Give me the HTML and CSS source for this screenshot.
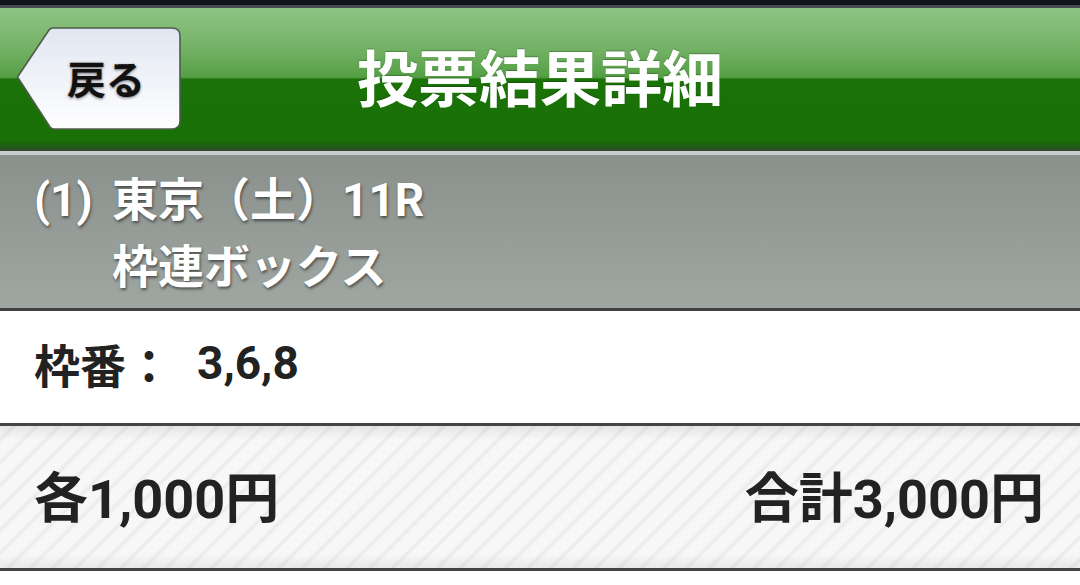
FILE: index.html
```html
<!DOCTYPE html>
<html lang="ja">
<head>
<meta charset="utf-8">
<title>投票結果詳細</title>
<link rel="stylesheet" href="styles.css">
</head>
<body>
<div class="topbar"></div>
<header class="header">
  <a class="back">
    <svg class="back-shape" width="166" height="104" viewBox="0 0 166 104">
      <defs>
        <linearGradient id="bg" x1="0" y1="0" x2="0" y2="1">
          <stop offset="0" stop-color="#e0e6f1"/>
          <stop offset="1" stop-color="#ffffff"/>
        </linearGradient>
      </defs>
      <path d="M1.5 50 L33 3 Q34.5 1 37 1 H156 Q164 1 164 9 V94 Q164 102 156 102 H38 Q35.5 102 34 100 Z" fill="url(#bg)" stroke="#4d5d4b" stroke-width="1.6"/>
    </svg>
    <span class="back-label">戻る</span>
  </a>
  <h1 class="title">投票結果詳細</h1>
  <div class="spacer"></div>
</header>
<section class="race">
  <div class="race-no">(1)</div>
  <div class="race-info">
    <div>東京（土）11R</div>
    <div>枠連ボックス</div>
  </div>
</section>
<section class="row numbers">
  <span class="label">枠番：</span><span class="value">3,6,8</span>
</section>
<section class="row amounts">
  <span>各1,000円</span>
  <span>合計3,000円</span>
</section>
</body>
</html>
```

FILE: styles.css
```css
html, body {
  margin: 0;
  padding: 0;
  background: #ffffff;
}
body {
  width: 1080px;
  font-family: "Roboto", "Noto Sans CJK JP", sans-serif;
  font-weight: 700;
}
.topbar {
  height: 5px;
  background: #0f131c;
  border-bottom: 3px solid #454b4f;
}
.header {
  height: 147px;
  box-sizing: border-box;
  border-bottom: 4px solid #c8ccd0;
  background: linear-gradient(to bottom,
    #8ec484 0px, #74b266 40px, #56a046 68px, #4c963b 70px,
    #1b7308 71px, #187006 132px, #1d5c13 138px, #34472f 143px);
  display: grid;
  grid-template-columns: 1fr auto 1fr;
  align-items: center;
}
.back {
  justify-self: start;
  margin-left: 16px;
  margin-top: -2px;
  display: grid;
  width: 166px;
  height: 104px;
}
.back-shape, .back-label {
  grid-area: 1 / 1;
}
.back-label {
  align-self: center;
  justify-self: start;
  margin-left: 51px;
  margin-top: -4px;
  font-family: "Noto Sans CJK JP", sans-serif;
  font-size: 39px;
  font-weight: 700;
  color: #111;
  text-shadow: 0 1px 3px rgba(0,0,0,0.55);
}
.title {
  margin: 0;
  font-family: "Noto Sans CJK JP", sans-serif;
  font-size: 61px;
  font-weight: 700;
  color: #ffffff;
  line-height: 1;
  margin-top: -8px;
  text-shadow: 0 -1px 1px rgba(0,0,0,0.25);
}
.race {
  height: 156px;
  box-sizing: border-box;
  padding: 12px 0 0 34px;
  background: linear-gradient(to bottom, #8a908b, #a0a6a2);
  border-bottom: 3px solid #404242;
  display: flex;
  color: #ffffff;
  font-size: 46px;
  line-height: 67px;
  text-shadow: 1px 2px 3px rgba(0,0,0,0.5);
}
.race-no {
  width: 78px;
}
.row {
  display: flex;
  align-items: center;
  color: #222222;
  box-sizing: border-box;
  border-bottom: 3px solid #444444;
}
.numbers {
  height: 115px;
  padding: 0 0 9px 34px;
  font-size: 46px;
}
.numbers .value {
  margin-left: 25px;
}
.amounts {
  height: 145px;
  padding: 0 36px 6px 34px;
  font-size: 54px;
  justify-content: space-between;
  background:
    linear-gradient(to bottom, rgba(0,0,0,0.07) 0px, rgba(0,0,0,0) 14px, rgba(0,0,0,0) 128px, rgba(0,0,0,0.06) 142px),
    repeating-linear-gradient(135deg, #f7f7f7 0px, #f7f7f7 7px, #eaeaea 10px, #f7f7f7 13px, #f7f7f7 16px);
}
```
